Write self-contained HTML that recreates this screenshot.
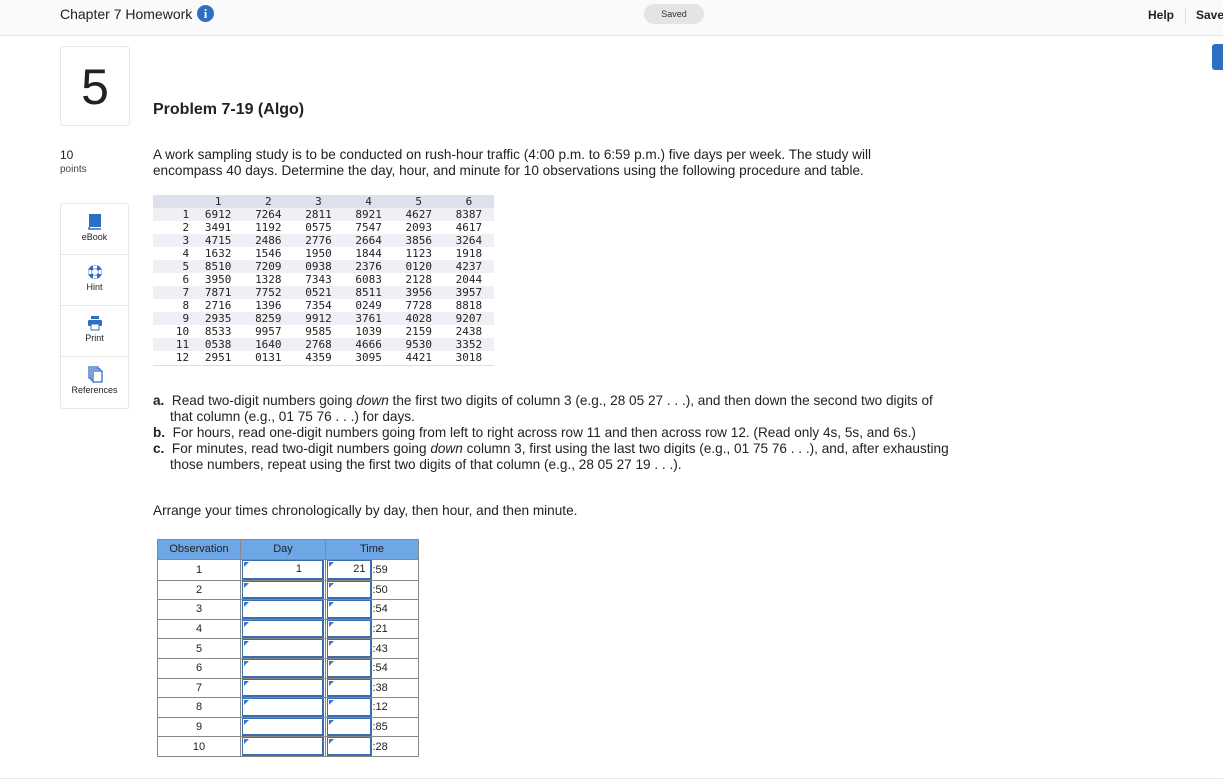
<!DOCTYPE html>
<html><head><meta charset="utf-8"><style>
*{margin:0;padding:0;box-sizing:border-box}
body{width:1223px;height:784px;overflow:hidden;background:#fff;font-family:"Liberation Sans",Arial,sans-serif;color:#222;position:relative}
.a{position:absolute}
.hdr{left:0;top:0;width:1223px;height:36px;background:#fafafa;border-bottom:1px solid #e6e6e6}
.txt{font-size:13.6px;line-height:16px;color:#222}
table{border-collapse:collapse}
.dt{position:absolute;left:153px;top:195px;width:341px;font-family:"DejaVu Sans Mono","Liberation Mono",monospace;font-size:11px;color:#222}
.dt td{height:13px;text-align:center;padding:0;line-height:13px;width:50px}
.dt td:first-child{width:40px;text-align:right;padding-right:4px}
.dt tr:nth-child(even) td{background:#eef0f5}
.dt tr.h td{background:#dde1ee;height:12px}
.at{position:absolute;left:157px;top:539px;font-size:11px;color:#222}
.at td,.at th{border:1px solid #888;height:19.6px;padding:0;text-align:center;font-weight:normal}
.at th{background:#6fa7e6;color:#222}
.inp{position:relative;height:100%;border:2px solid #3a6db0;border-width:1px 2px 2px 1px;margin:0 1px}
.inp:before{content:"";position:absolute;left:1px;top:1px;border-left:5px solid #3a78c8;border-bottom:5px solid transparent}
.side{left:60px;width:69px;border:1px solid #e6e6e6;border-radius:3px}
.side div{height:51px;border-bottom:1px solid #e6e6e6;text-align:center;font-size:9px;color:#222;padding-top:9px}
.side div:last-child{border-bottom:none}
</style></head><body>
<div class="a hdr"></div>
<div class="a" style="left:60px;top:6px;font-size:14px;color:#222">Chapter 7 Homework</div>
<div class="a" style="left:197px;top:5px;width:17px;height:17px;border-radius:50%;background:#2f6fc3;color:#fff;font:bold 13px/17px 'Liberation Serif',serif;text-align:center">i</div>
<div class="a" style="left:644px;top:4px;width:60px;height:20px;border-radius:10px;background:#e4e4e4;font-size:9px;line-height:20px;text-align:center;color:#333">Saved</div>
<div class="a" style="left:1148px;top:8px;font-size:12px;font-weight:bold">Help</div>
<div class="a" style="left:1185px;top:7px;width:1px;height:18px;background:#e0e0e0"></div>
<div class="a" style="left:1196px;top:8px;font-size:12px;font-weight:bold">Save</div>
<div class="a" style="left:1212px;top:44px;width:14px;height:26px;border-radius:3px;background:#2f6fc3"></div>

<div class="a" style="left:60px;top:46px;width:70px;height:80px;border:1px solid #e6e6e6;border-radius:4px;font-size:50px;line-height:80px;text-align:center;color:#222">5</div>
<div class="a" style="left:153px;top:101px;font-size:16px;font-weight:bold">Problem 7-19 (Algo)</div>
<div class="a" style="left:60px;top:148px;font-size:12px">10</div>
<div class="a" style="left:60px;top:164px;font-size:10px;color:#444">points</div>
<div class="a txt" style="left:153px;top:147px;width:740px">A work sampling study is to be conducted on rush-hour traffic (4:00 p.m. to 6:59 p.m.) five days per week. The study will encompass 40 days. Determine the day, hour, and minute for 10 observations using the following procedure and table.</div>

<table class="dt">
<tr class="h"><td></td><td>1</td><td>2</td><td>3</td><td>4</td><td>5</td><td>6</td></tr>
<tr><td>1</td><td>6912</td><td>7264</td><td>2811</td><td>8921</td><td>4627</td><td>8387</td></tr>
<tr><td>2</td><td>3491</td><td>1192</td><td>0575</td><td>7547</td><td>2093</td><td>4617</td></tr>
<tr><td>3</td><td>4715</td><td>2486</td><td>2776</td><td>2664</td><td>3856</td><td>3264</td></tr>
<tr><td>4</td><td>1632</td><td>1546</td><td>1950</td><td>1844</td><td>1123</td><td>1918</td></tr>
<tr><td>5</td><td>8510</td><td>7209</td><td>0938</td><td>2376</td><td>0120</td><td>4237</td></tr>
<tr><td>6</td><td>3950</td><td>1328</td><td>7343</td><td>6083</td><td>2128</td><td>2044</td></tr>
<tr><td>7</td><td>7871</td><td>7752</td><td>0521</td><td>8511</td><td>3956</td><td>3957</td></tr>
<tr><td>8</td><td>2716</td><td>1396</td><td>7354</td><td>0249</td><td>7728</td><td>8818</td></tr>
<tr><td>9</td><td>2935</td><td>8259</td><td>9912</td><td>3761</td><td>4028</td><td>9207</td></tr>
<tr><td>10</td><td>8533</td><td>9957</td><td>9585</td><td>1039</td><td>2159</td><td>2438</td></tr>
<tr><td>11</td><td>0538</td><td>1640</td><td>2768</td><td>4666</td><td>9530</td><td>3352</td></tr>
<tr><td>12</td><td>2951</td><td>0131</td><td>4359</td><td>3095</td><td>4421</td><td>3018</td></tr>
</table>
<div class="a" style="left:153px;top:365px;width:341px;height:1px;background:#ddd"></div>

<div class="a side" style="top:203px">
<div><svg width="16" height="17" viewBox="0 0 16 17"><rect x="2" y="1" width="12" height="13" fill="#2f6fc3"/><path d="M2 14v2h12" stroke="#2f6fc3" stroke-width="1.5" fill="none"/></svg><br>eBook</div>
<div><svg width="16" height="16" viewBox="0 0 16 16"><circle cx="8" cy="8" r="7" fill="#2f6fc3"/><circle cx="8" cy="8" r="3" fill="#fff"/><path d="M6 1.5h4v3H6zM6 11.5h4v3H6zM1.5 6h3v4h-3zM11.5 6h3v4h-3z" fill="#fff"/></svg><br>Hint</div>
<div><svg width="16" height="16" viewBox="0 0 16 16"><rect x="4" y="1" width="8" height="3" fill="#2f6fc3"/><rect x="1" y="5" width="14" height="6" rx="1" fill="#2f6fc3"/><rect x="4" y="9" width="8" height="6" fill="#fff" stroke="#2f6fc3"/></svg><br>Print</div>
<div><svg width="16" height="17" viewBox="0 0 16 17"><rect x="2" y="1" width="9" height="11" fill="#fff" stroke="#2f6fc3" stroke-width="1.3"/><rect x="4" y="3" width="9" height="11" fill="#fff" stroke="#2f6fc3" stroke-width="1.3"/><rect x="6" y="5" width="9" height="11" fill="#fff" stroke="#2f6fc3" stroke-width="1.3"/></svg><br>References</div>
</div>

<div class="a txt" style="left:153px;top:393px;width:800px">
<div style="padding-left:17px;text-indent:-17px"><b>a.</b>&nbsp; Read two-digit numbers going <i>down</i> the first two digits of column 3 (e.g., 28 05 27 . . .), and then down the second two digits of that column (e.g., 01 75 76 . . .) for days.</div>
<div style="padding-left:17px;text-indent:-17px"><b>b.</b>&nbsp; For hours, read one-digit numbers going from left to right across row 11 and then across row 12. (Read only 4s, 5s, and 6s.)</div>
<div style="padding-left:17px;text-indent:-17px"><b>c.</b>&nbsp; For minutes, read two-digit numbers going <i>down</i> column 3, first using the last two digits (e.g., 01 75 76 . . .), and, after exhausting those numbers, repeat using the first two digits of that column (e.g., 28 05 27 19 . . .).</div>
</div>
<div class="a txt" style="left:153px;top:503px">Arrange your times chronologically by day, then hour, and then minute.</div>

<table class="at">
<tr><th style="width:83px">Observation</th><th style="width:85px">Day</th><th colspan="2" style="width:93px">Time</th></tr>
<tr><td>1</td><td><div class="inp" style="text-align:right;padding-right:20px;line-height:17px">1</div></td><td style="width:47px;border-right:none"><div class="inp" style="text-align:right;padding-right:4px;line-height:17px">21</div></td><td style="border-left:none;text-align:left">:59</td></tr>
<tr><td>2</td><td><div class="inp"></div></td><td style="border-right:none"><div class="inp"></div></td><td style="border-left:none;text-align:left">:50</td></tr>
<tr><td>3</td><td><div class="inp"></div></td><td style="border-right:none"><div class="inp"></div></td><td style="border-left:none;text-align:left">:54</td></tr>
<tr><td>4</td><td><div class="inp"></div></td><td style="border-right:none"><div class="inp"></div></td><td style="border-left:none;text-align:left">:21</td></tr>
<tr><td>5</td><td><div class="inp"></div></td><td style="border-right:none"><div class="inp"></div></td><td style="border-left:none;text-align:left">:43</td></tr>
<tr><td>6</td><td><div class="inp"></div></td><td style="border-right:none"><div class="inp"></div></td><td style="border-left:none;text-align:left">:54</td></tr>
<tr><td>7</td><td><div class="inp"></div></td><td style="border-right:none"><div class="inp"></div></td><td style="border-left:none;text-align:left">:38</td></tr>
<tr><td>8</td><td><div class="inp"></div></td><td style="border-right:none"><div class="inp"></div></td><td style="border-left:none;text-align:left">:12</td></tr>
<tr><td>9</td><td><div class="inp"></div></td><td style="border-right:none"><div class="inp"></div></td><td style="border-left:none;text-align:left">:85</td></tr>
<tr><td>10</td><td><div class="inp"></div></td><td style="border-right:none"><div class="inp"></div></td><td style="border-left:none;text-align:left">:28</td></tr>
</table>
<div class="a" style="left:0;top:778px;width:1223px;height:1px;background:#e6e6e6"></div>
</body></html>
